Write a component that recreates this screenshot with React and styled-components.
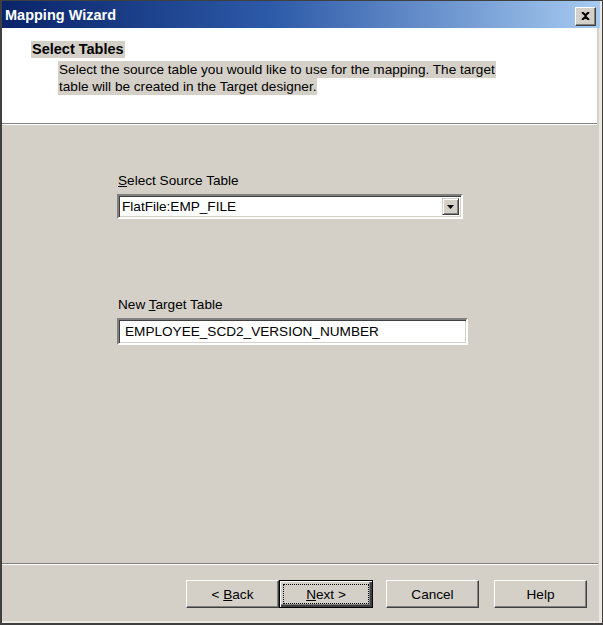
import styled, { createGlobalStyle } from 'styled-components';

const GlobalStyle = createGlobalStyle`
  html, body {
    margin: 0;
    padding: 0;
    background: #d4d0c8;
  }
  #root {
    height: 625px;
  }
`;

const Window = styled.div`
  box-sizing: border-box;
  width: 603px;
  height: 625px;
  display: flex;
  flex-direction: column;
  background: #d4d0c8;
  border-top: 1px solid #404040;
  border-left: 2px solid #404040;
  border-right: 1px solid #404040;
  border-bottom: 2px solid #404040;
  box-shadow: inset -3px -2px 0 #ece9e2;
  font-family: "Liberation Sans", Arial, sans-serif;
  font-size: 13.6px;
  color: #000;
`;

const TitleBar = styled.div`
  height: 27px;
  flex-shrink: 0;
  display: flex;
  align-items: center;
  justify-content: space-between;
  padding: 0 4px 0 3px;
  background: linear-gradient(to right, #0a246a 0%, #2d5aa8 45%, #a6caf0 100%);
  color: #fff;
  font-weight: bold;
  font-size: 14.5px;
  margin-right: 2px;
`;

const CloseBtn = styled.div`
  box-sizing: border-box;
  width: 21px;
  height: 19px;
  margin-top: 3px;
  background: #d4d0c8;
  border: 1px solid;
  border-color: #fff #404040 #404040 #fff;
  box-shadow: inset -1px -1px 0 #808080;
  display: flex;
  align-items: center;
  justify-content: center;
`;

const Header = styled.div`
  height: 96px;
  flex-shrink: 0;
  background: #fff;
  padding: 13px 0 0 29px;
  box-sizing: border-box;
  margin-right: 5px;
  border-bottom: 1px solid #808080;
  box-shadow: 0 1px 0 #fff;
  display: flex;
  flex-direction: column;
  align-items: flex-start;
`;

const Marked = styled.span`
  background: #d4d0c8;
  line-height: 17px;
  padding: 0 1px;
`;

const Heading = styled(Marked)`
  font-weight: bold;
  font-size: 14.5px;
`;

const Desc = styled.div`
  margin-left: 27px;
  margin-top: 3px;
  display: flex;
  flex-direction: column;
  align-items: flex-start;
`;

const Body = styled.div`
  flex: 1;
  display: flex;
  flex-direction: column;
  padding: 45px 0 0 115px;
  margin-top: 3px;
`;

const Label = styled.div`
  line-height: 17px;
  margin-left: 1px;
  margin-bottom: 5px;
  margin-top: ${p => p.$top || 0}px;
`;

const Field = styled.div`
  box-sizing: border-box;
  width: ${p => p.$w}px;
  height: ${p => p.$h}px;
  background: #fff;
  border: 2px solid;
  border-color: #808080 #fff #fff #808080;
  box-shadow: inset 1px 1px 0 #404040, inset -1px -1px 0 #d4d0c8;
  display: flex;
  align-items: center;
  padding-left: ${p => p.$pad || 3}px;
`;

const FieldText = styled.span`
  flex: 1;
`;

const DropBtn = styled.div`
  box-sizing: border-box;
  width: 17px;
  height: 17px;
  margin-right: 2px;
  background: #d4d0c8;
  border: 1px solid;
  border-color: #d4d0c8 #404040 #404040 #d4d0c8;
  box-shadow: inset 1px 1px 0 #fff, inset -1px -1px 0 #808080;
  display: flex;
  align-items: center;
  justify-content: center;
`;

const Footer = styled.div`
  height: 60px;
  flex-shrink: 0;
  border-top: 1px solid #808080;
  box-shadow: inset 0 1px 0 #fff;
  margin-right: 4px;
  display: flex;
  justify-content: flex-end;
  align-items: flex-start;
  padding: 16px 11px 0 0;
  box-sizing: border-box;
`;

const Button = styled.div`
  box-sizing: border-box;
  width: ${p => p.$w || 93}px;
  height: 28px;
  margin-left: ${p => p.$gap || 0}px;
  background: #d4d0c8;
  border: 1px solid;
  border-color: ${p => p.$default ? '#000' : '#fff #404040 #404040 #fff'};
  box-shadow: ${p => p.$default
    ? 'inset 1px 1px 0 #fff, inset -2px -2px 0 #404040, inset -3px -3px 0 #808080'
    : 'inset -1px -1px 0 #808080'};
  display: flex;
  align-items: center;
  justify-content: center;
  padding: 3px;
`;

const Focus = styled.div`
  flex: 1;
  align-self: stretch;
  border: 1px dotted #000;
  display: flex;
  align-items: center;
  justify-content: center;
`;

const U = styled.u`
  text-decoration: underline;
`;

export default function App() {
  return (
    <>
      <GlobalStyle />
      <Window>
        <TitleBar>
          <span>Mapping Wizard</span>
          <CloseBtn>
            <svg width="9" height="8" viewBox="0 0 9 8">
              <path d="M1 0 L4.5 3.3 L8 0 M1 8 L4.5 4.7 L8 8" stroke="#000" strokeWidth="2" fill="none" />
            </svg>
          </CloseBtn>
        </TitleBar>
        <Header>
          <Heading>Select Tables</Heading>
          <Desc>
            <Marked>Select the source table you would like to use for the mapping. The target</Marked>
            <Marked>table will be created in the Target designer.</Marked>
          </Desc>
        </Header>
        <Body>
          <Label><U>S</U>elect Source Table</Label>
          <Field $w={346} $h={25}>
            <FieldText>FlatFile:EMP_FILE</FieldText>
            <DropBtn>
              <svg width="7" height="4" viewBox="0 0 7 4">
                <path d="M0 0 H7 L3.5 4 Z" fill="#000" />
              </svg>
            </DropBtn>
          </Field>
          <Label $top={77}>New <U>T</U>arget Table</Label>
          <Field $w={351} $h={27} $pad={6}>
            <FieldText>EMPLOYEE_SCD2_VERSION_NUMBER</FieldText>
          </Field>
        </Body>
        <Footer>
          <Button $w={93}><span>&lt; <U>B</U>ack</span></Button>
          <Button $w={94} $default><Focus><span><U>N</U>ext &gt;</span></Focus></Button>
          <Button $gap={13}>Cancel</Button>
          <Button $gap={15}>Help</Button>
        </Footer>
      </Window>
    </>
  );
}
